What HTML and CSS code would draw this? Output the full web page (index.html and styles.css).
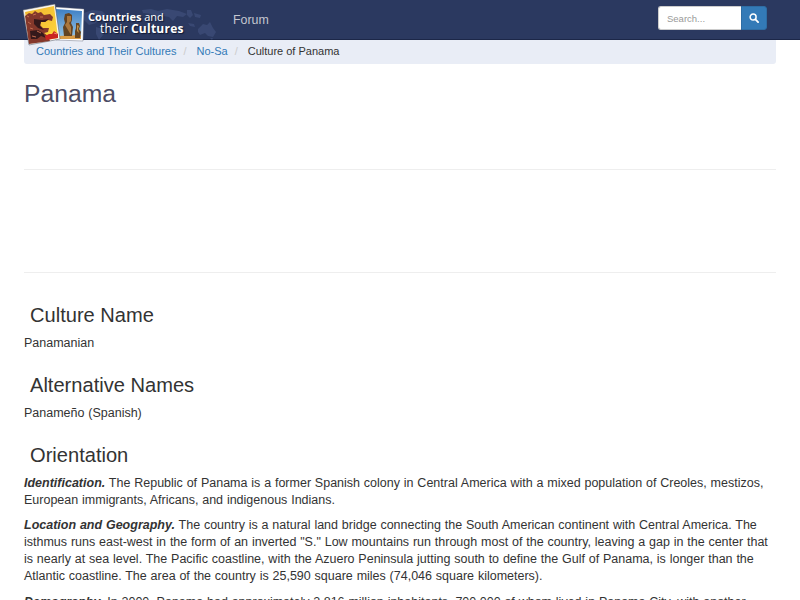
FILE: index.html
```
<!DOCTYPE html>
<html lang="en">
<head>
  <meta charset="UTF-8">
  <meta name="viewport" content="width=device-width, initial-scale=1.0">
  <title>Culture of Panama</title>
  <link rel="stylesheet" href="styles.css">
</head>
<body>
  <nav class="navbar">
    <a class="brand" href="#">
      <svg class="logo" width="221" height="48" viewBox="0 0 221 48">
        <defs>
          <linearGradient id="sky" x1="0" y1="0" x2="0" y2="1">
            <stop offset="0" stop-color="#3d7fc4"/>
            <stop offset="1" stop-color="#9cc8e6"/>
          </linearGradient>
          <linearGradient id="gold" x1="0" y1="0" x2="1" y2="1">
            <stop offset="0" stop-color="#efb52e"/>
            <stop offset="1" stop-color="#ffd83e"/>
          </linearGradient>
        </defs>
        <!-- world map behind the name -->
        <g fill="#4a5b8a" opacity=".45">
          <path d="M84 13l8-3 10 1 4 4-7 3-3 5-7 2-5-5zM96 27l7 2 1 5-5 6-3-6z"/>
          <path d="M142 10l9-1 7 2 9-2 12 2 8 3-4 3-6-1-4 5-4-4-6-1-5 2-7-4-8-1z"/>
          <path d="M187 10l4 0 2 5-3 3-3-3zM194 13l7 2-1 3-5-1zM188 23l6 1 1 3-5-1z"/>
          <path d="M198 29l5-5 4 1 3-3 3 6 3 4-3 5-5-1-3-3-5 2-2-3zM210 38l3 0-1 2z"/>
        </g>
        <!-- statues photo -->
        <g>
          <path d="M56 7l28 2-1 32-27-1z" fill="#fff" stroke="#51576b" stroke-width=".4"/>
          <path d="M56 9l26 2-1 28-25-1z" fill="url(#sky)"/>
          <path d="M58 36l23-1 0 4-21 0z" fill="#d99b45"/>
          <path d="M65 14l4-1 3 2 0 5-1 3 2 4-1 9-8 0-1-9 2-4-1-4z" fill="#634322"/>
          <path d="M67 16l4 0 0 5-2 2 2 4 0 8-3-5-3-5 2-3z" fill="#ab773d"/>
          <path d="M76 23l3 0 1 3-1 3 2 3-1 6-5 0 0-7 1-3z" fill="#684621"/>
          <path d="M77 25l2 1-1 3 1 4-2-2z" fill="#c2934a"/>
        </g>
        <!-- carved head photo -->
        <g>
          <path d="M23 10l32-6 5 35-31 6z" fill="#f9f6ed" stroke="#4b5061" stroke-width=".5"/>
          <path d="M25 12l29-6 4 32-28 5z" fill="url(#gold)"/>
          <path d="M25 16l4-3 3 1 3-3 3 2 3-1 3 3 6-1 3 3-1 4-4-1-3 2-4-1-1 4 3 3 6 0-1 4-4 1 4 3 2 5-21 3z" fill="#84382b"/>
          <path d="M34 19l8 1 7-1-4 3-4 0-1 4 4 4-6-2-4-4zM30 31l8-1 5 3 3 5-5-2-4 3-6 0z" fill="#35191b"/>
          <path d="M27 16l2 1M33 15l3-1M40 17l3 0M28 22l3 2M30 28l3 1M37 31l4 2M32 36l4 1" stroke="#c66d50" stroke-width="1"/>
          <path d="M45 36l4-2 3 0 2-3 4 3 0 4-12 2z" fill="#ca2421"/>
          <path d="M54 33l3 1" stroke="#f18a72"/>
        </g>
      </svg>
      <span class="brand-name"><span><b>Countries</b> and</span><span class="brand-second">their <b>Cultures</b></span></span>
    </a>
    <a class="nav-link" href="#">Forum</a>
    <form class="search">
      <input type="text" class="search-input" placeholder="Search...">
      <button type="button" class="search-btn" aria-label="Search">
        <svg width="10" height="10" viewBox="0 0 10 10">
          <circle cx="4.1" cy="4.1" r="3" fill="none" stroke="#fff" stroke-width="1.5"/>
          <path d="M6.4 6.4l2.7 2.7" stroke="#fff" stroke-width="1.8" stroke-linecap="round"/>
        </svg>
      </button>
    </form>
  </nav>

  <div class="container">
    <ol class="breadcrumb">
      <li><a href="#">Countries and Their Cultures</a></li>
      <li><a href="#">No-Sa</a></li>
      <li>Culture of Panama</li>
    </ol>

    <h1>Panama</h1>
    <div class="ad-slot ad-top"></div>
    <div class="ad-slot ad-bottom"></div>

    <h2>Culture Name</h2>
    <p>Panamanian</p>

    <h2>Alternative Names</h2>
    <p>Panameño (Spanish)</p>

    <h2>Orientation</h2>
    <p><b><i>Identification.</i></b> The Republic of Panama is a former Spanish colony in Central America with a mixed population of Creoles, mestizos,<br>
    European immigrants, Africans, and indigenous Indians.</p>
    <p><b><i>Location and Geography.</i></b> The country is a natural land bridge connecting the South American continent with Central America. The<br>
    isthmus runs east-west in the form of an inverted "S." Low mountains run through most of the country, leaving a gap in the center that<br>
    is nearly at sea level. The Pacific coastline, with the Azuero Peninsula jutting south to define the Gulf of Panama, is longer than the<br>
    Atlantic coastline. The area of the country is 25,590 square miles (74,046 square kilometers).</p>
    <p><b><i>Demography.</i></b> In 2000, Panama had approximately 2.816 million inhabitants, 700,000 of whom lived in Panama City, with another</p>
  </div>
</body>
</html>
```
FILE: styles.css
```
* {
  box-sizing: border-box;
}

body {
  margin: 0;
  height: 600px;
  overflow: hidden;
  background: #fff;
  color: #333;
  font-family: "Liberation Sans", Arial, sans-serif;
  font-size: 12.5px;
  line-height: 17.15px;
}

a {
  color: #337ab7;
  text-decoration: none;
}

/* Top bar */
.navbar {
  position: relative;
  display: flex;
  height: 40px;
  background: #2b3960;
  border-bottom: 1px solid #1c2748;
}

.brand {
  position: relative;
  width: 221px;
  color: #fff;
}

/* photos hang over the bottom edge of the bar */
.logo {
  position: absolute;
  top: 0;
  left: 0;
  z-index: 2;
}

.brand-name {
  position: relative;
  z-index: 3;
  display: flex;
  flex-direction: column;
  padding: 10px 0 0 88px;
  font-family: "Open Sans", sans-serif;
  font-size: 11px;
  line-height: 13px;
  white-space: nowrap;
  text-shadow: 1px 1px 1px #111a35;
}

.brand-second {
  padding-left: 12px;
  font-size: 12px;
  line-height: 11px;
  letter-spacing: .25px;
}

.nav-link {
  padding: 11px 12px;
  color: #c3c6cf;
  font-size: 12.4px;
  line-height: 18px;
}

.search {
  display: flex;
  margin: 6px 33px 0 auto;
  width: 109px;
  height: 24px;
}

.search-input {
  width: 83px;
  height: 24px;
  padding: 0 8px;
  border: 1px solid #ccc;
  border-right: 0;
  border-radius: 3px 0 0 3px;
  font-family: inherit;
  font-size: 9.5px;
}

.search-input::placeholder {
  color: #999;
}

.search-btn {
  display: flex;
  align-items: center;
  justify-content: center;
  width: 26px;
  height: 24px;
  padding: 0;
  border: 1px solid #2e6da4;
  border-radius: 0 3px 3px 0;
  background: #337ab7;
}

/* Content */
.container {
  padding: 0 24px;
}

.breadcrumb {
  display: flex;
  height: 24px;
  margin: 0;
  padding: 3px 12px;
  border-radius: 0 0 3px 3px;
  background: #e9edf6;
  font-size: 11px;
  list-style: none;
}

.breadcrumb li + li::before {
  content: "/";
  padding: 0 10px 0 7px;
  color: #ccc;
}

h1 {
  margin: 15px 0 0;
  color: #4c4c64;
  font-size: 24.7px;
  font-weight: 400;
  line-height: 30px;
}

h2 {
  margin: 21.3px 0 7.6px 6px;
  font-size: 20.1px;
  font-weight: 400;
  line-height: 24px;
}

p {
  margin: 0 0 8px;
  white-space: nowrap;
  word-spacing: .35px;
}

.ad-slot {
  height: 103px;
  border-bottom: 1px solid #eee;
}

.ad-top {
  height: 61px;
}

.ad-bottom {
  margin-bottom: 30px;
}

.ad-bottom + h2 {
  margin-top: 0;
}
```
